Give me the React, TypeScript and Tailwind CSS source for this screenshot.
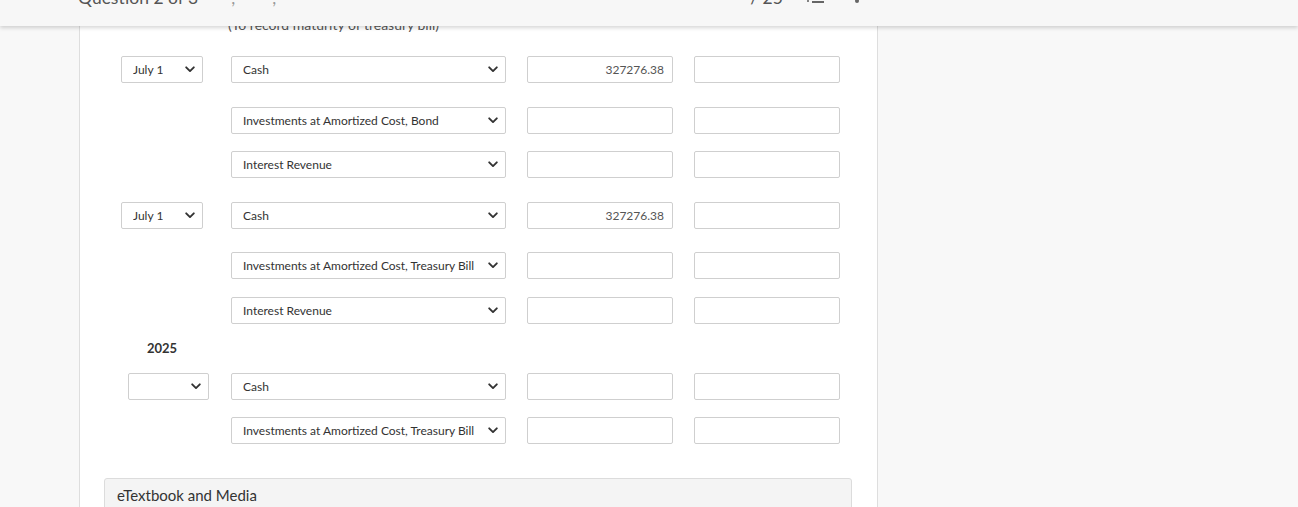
import React from "react";

type Row = {
  date?: string | null;
  showDate?: boolean;
  account: string;
  debit?: string;
  credit?: string;
  mt: string;
  dateShift?: boolean;
};

function Chevron() {
  return (
    <svg width="10" height="7" viewBox="0 0 10 7" fill="none" className="shrink-0">
      <path d="M1.2 1.3 5 5.1l3.8-3.8" stroke="#333" strokeWidth="1.9" strokeLinecap="round" strokeLinejoin="round" />
    </svg>
  );
}

function FakeSelect({ value, className }: { value?: string | null; className: string }) {
  return (
    <div
      className={`flex h-[27px] items-center justify-between rounded-[2px] border border-[#cfcfcf] bg-white pl-[11px] pr-[7px] ${className}`}
    >
      <span className="truncate text-[12px] text-[#333]">{value}</span>
      <Chevron />
    </div>
  );
}

function Amount({ value }: { value?: string }) {
  return (
    <div className="flex h-[27px] w-[146px] items-center justify-end rounded-[2px] border border-[#cfcfcf] bg-white pr-[8px] text-[12px] text-[#555]">
      {value}
    </div>
  );
}

function EntryRow({ row }: { row: Row }) {
  return (
    <div className={`flex items-center ${row.mt}`}>
      <div className="w-[110px]">
        {row.showDate && (
          <FakeSelect
            value={row.date}
            className={row.dateShift ? "ml-[7px] w-[81px]" : "w-[82px]"}
          />
        )}
      </div>
      <FakeSelect value={row.account} className="w-[275px]" />
      <div className="ml-[21px]">
        <Amount value={row.debit} />
      </div>
      <div className="ml-[21px]">
        <Amount value={row.credit} />
      </div>
    </div>
  );
}

const groupA: Row[] = [
  { showDate: true, date: "July 1", account: "Cash", debit: "327276.38", mt: "mt-[21px]" },
  { account: "Investments at Amortized Cost, Bond", mt: "mt-[24px]" },
  { account: "Interest Revenue", mt: "mt-[17px]" },
  { showDate: true, date: "July 1", account: "Cash", debit: "327276.38", mt: "mt-[24px]" },
  { account: "Investments at Amortized Cost, Treasury Bill", mt: "mt-[23px]" },
  { account: "Interest Revenue", mt: "mt-[18px]" },
];

const groupB: Row[] = [
  { showDate: true, date: null, dateShift: true, account: "Cash", mt: "mt-[17px]" },
  { account: "Investments at Amortized Cost, Treasury Bill", mt: "mt-[17px]" },
];

export default function App() {
  return (
    <div
      className="relative h-[507px] w-full overflow-hidden bg-[#f8f8f8]"
      style={{ fontFamily: "Lato, 'Noto Sans', sans-serif" }}
    >
      {/* sticky question header, mostly scrolled out of view */}
      <header className="absolute inset-x-0 top-0 z-10 h-[26px] overflow-hidden bg-[#f7f7f7] shadow-[0_2px_4px_rgba(0,0,0,0.16)]">
        <div className="flex items-start text-[17.5px] leading-[22px] text-[#555]">
          <span className="ml-[78px] -mt-[13px]">Question 2 of 3</span>
          <span className="ml-[33px] -mt-[13px] text-[#999]">,</span>
          <span className="ml-[37px] -mt-[13px] text-[#999]">,</span>
          <span className="ml-[474px] -mt-[13px]">/ 25</span>
          <svg width="20" height="20" viewBox="0 0 20 20" className="ml-[22px] -mt-[17px]" fill="none">
            <path d="M7 19h12M7 11h12" stroke="#666" strokeWidth="2" />
            <path d="M3 14v5" stroke="#666" strokeWidth="1.6" />
          </svg>
          <svg width="6" height="20" viewBox="0 0 6 20" className="ml-[29px] -mt-[17px]" fill="#666">
            <circle cx="3" cy="8" r="2" />
            <circle cx="3" cy="18" r="2" />
          </svg>
        </div>
      </header>

      <main className="ml-[79px] h-full w-[799px] border-x border-[#dedede] bg-white pl-[41px] pt-[15px]">
        <p className="ml-[107px] text-[14px] leading-[20px] text-[#555]">(To record maturity of treasury bill)</p>

        {groupA.map((row, i) => (
          <EntryRow key={i} row={row} />
        ))}

        <p className="ml-[26px] mt-[16px] text-[13px] font-bold leading-[16px] text-[#333]">2025</p>

        {groupB.map((row, i) => (
          <EntryRow key={i} row={row} />
        ))}

        <section className="-ml-[17px] mt-[34px] w-[748px] rounded-t-[3px] border border-[#dcdcdc] bg-[#f4f4f4] px-[12px] pb-[12px] pt-[6px]">
          <h2 className="text-[15px] leading-[20px] text-[#333]">eTextbook and Media</h2>
        </section>
      </main>
    </div>
  );
}
